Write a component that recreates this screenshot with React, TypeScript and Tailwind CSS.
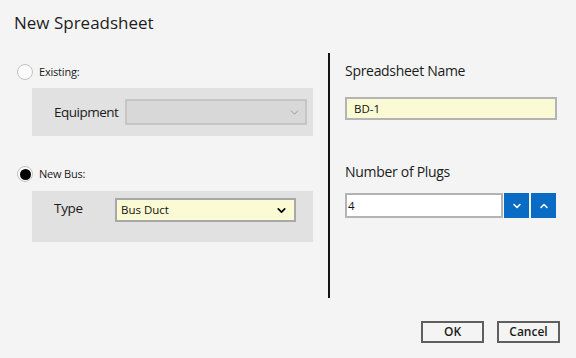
import { ChevronDown, ChevronUp } from "lucide-react";

function Radio({ checked, label }: { checked?: boolean; label: string }) {
  return (
    <div className="flex items-center pl-[17px] h-4">
      <span className="w-4 h-4 rounded-full border-[1.5px] border-[#c2c2c2] bg-[#fbfbfb] flex items-center justify-center">
        {checked && <span className="w-[11px] h-[11px] rounded-full bg-black" />}
      </span>
      <span className="ml-[6px] text-[11px] leading-4 text-[#1a1a1a] tracking-[-0.2px]">{label}</span>
    </div>
  );
}

export default function App() {
  return (
    <div
      className="w-[576px] h-[358px] bg-[#f4f4f4] flex flex-col text-[#1b1b1b] overflow-hidden"
      style={{ fontFamily: '"Open Sans", "Noto Sans", sans-serif' }}
    >
      <div className="h-[53px] pt-[11px] pl-[14px]">
        <h1 className="text-[17px] leading-[24px] text-[#1e1e1e]">New Spreadsheet</h1>
      </div>

      <div className="flex h-[245px]">
        {/* left side */}
        <div className="w-[328px] pt-[11px]">
          <Radio label="Existing:" />
          <div className="ml-[32px] mt-[8px] w-[281px] h-[48px] bg-[#e1e1e1] flex items-center pl-[22px]">
            <span className="w-[71px] text-[13.5px] leading-[19px] tracking-[-0.5px]">Equipment</span>
            <div className="w-[182px] h-[26px] bg-[#d8d8d8] border-2 border-[#c6c6c6] flex items-center justify-end pr-[4px]">
              <ChevronDown size={13} strokeWidth={1.5} className="text-[#8a8a8a]" />
            </div>
          </div>

          <div className="mt-[30px]">
            <Radio checked label="New Bus:" />
          </div>
          <div className="ml-[32px] mt-[9px] w-[281px] h-[51px] bg-[#e1e1e1] pt-[7px] pl-[22px]">
            <div className="flex items-center h-[24px]">
              <span className="w-[61px] text-[13.5px] leading-[19px] -mt-[3px] tracking-[-0.3px]">Type</span>
              <div className="w-[181px] h-[24px] bg-[#fafad4] border-2 border-[#a8a8a8] flex items-center justify-between pl-[4px] pr-[6px]">
                <span className="text-[11.5px] leading-4 text-[#111]">Bus Duct</span>
                <ChevronDown size={13} strokeWidth={3} className="text-black" />
              </div>
            </div>
          </div>
        </div>

        {/* divider */}
        <div className="w-[2px] bg-[#141414]" />

        {/* right side */}
        <div className="pl-[15px] pt-[8px]">
          <div className="text-[14px] leading-[19px] tracking-[-0.3px]">Spreadsheet Name</div>
          <div className="mt-[17px] w-[212px] h-[23px] bg-[#fafad4] border-2 border-[#b4b4b4] flex items-center pl-[7px]">
            <span className="text-[11.5px] leading-4 text-[#111]">BD-1</span>
          </div>

          <div className="mt-[42px] text-[14px] leading-[19px] tracking-[-0.3px]">Number of Plugs</div>
          <div className="mt-[12px] flex h-[25px]">
            <div className="w-[158px] h-[25px] bg-white border-2 border-[#b4b4b4] flex items-center pl-[1px]">
              <span className="text-[11.5px] leading-4 text-[#111]">4</span>
            </div>
            <button className="ml-[1px] w-[25px] h-[25px] bg-[#0a6bc4] flex items-center justify-center">
              <ChevronDown size={12} strokeWidth={3} className="text-white" />
            </button>
            <button className="ml-[2px] w-[25px] h-[25px] bg-[#0a6bc4] flex items-center justify-center">
              <ChevronUp size={12} strokeWidth={3} className="text-white" />
            </button>
          </div>
        </div>
      </div>

      <div className="mt-[23px] flex justify-end gap-[13px] pr-[16px]">
        <button className="w-[63px] h-[22px] border-2 border-[#5f5f5f] bg-[#f4f4f4] text-[12px] leading-4 font-semibold text-[#1b1b1b]">
          OK
        </button>
        <button className="w-[63px] h-[22px] border-2 border-[#5f5f5f] bg-[#f4f4f4] text-[12px] leading-4 font-semibold text-[#1b1b1b]">
          Cancel
        </button>
      </div>
    </div>
  );
}
